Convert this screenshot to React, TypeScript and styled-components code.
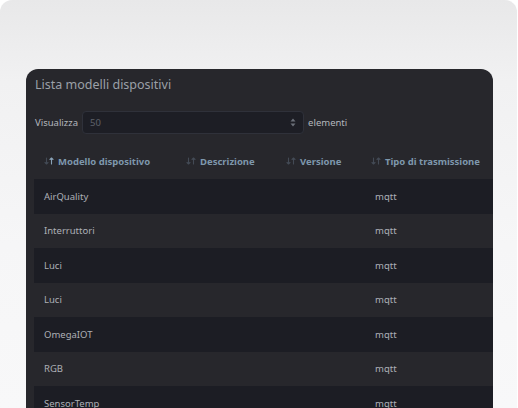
import React, { FC } from 'react';
import styled, { createGlobalStyle } from 'styled-components';

const GlobalStyle = createGlobalStyle`
  html, body {
    margin: 0;
    padding: 0;
    background: #ffffff;
  }
  body {
    font-family: "Noto Sans", "Open Sans", sans-serif;
    -webkit-font-smoothing: antialiased;
  }
`;

const Backdrop = styled.div`
  width: 517px;
  height: 408px;
  box-sizing: border-box;
  padding: 69px 24px 0 26px;
  border-radius: 12px 12px 0 0;
  background: linear-gradient(180deg, #e8e8e9 0%, #f1f1f2 20%, #f6f6f7 60%, #f8f8f9 100%);
  overflow: hidden;
`;

const Panel = styled.section`
  height: 100%;
  background: #27272c;
  border-radius: 12px 12px 0 0;
  display: flex;
  flex-direction: column;
`;

const Title = styled.h2`
  margin: 0;
  padding: 7px 9px 0;
  font-size: 12.5px;
  line-height: 18px;
  font-weight: 400;
  color: #9ba0a8;
`;

const Divider = styled.div`
  height: 2px;
  margin: 8px 0 0 9px;
  background: #343944;
`;

const Controls = styled.div`
  display: flex;
  align-items: center;
  gap: 4px;
  margin: 9px 0 0 9px;
  font-size: 9.5px;
  color: #b4b7be;
`;

const Select = styled.div`
  width: 222px;
  height: 23px;
  box-sizing: border-box;
  display: flex;
  align-items: center;
  justify-content: space-between;
  padding: 0 7px 0 7px;
  background: #1d1e25;
  border: 1px solid #2f313a;
  border-radius: 4px;
  color: #5d616a;
  font-size: 9.5px;
`;

const Table = styled.div`
  margin: 9px 0 0 8px;
  display: flex;
  flex-direction: column;
`;

const Row = styled.div<{ $dark?: boolean; $head?: boolean }>`
  display: grid;
  grid-template-columns: 142px 100px 85px 1fr;
  align-items: center;
  height: ${(p) => (p.$head ? '36px' : '34.5px')};
  background: ${(p) => (p.$dark ? '#1c1d24' : 'transparent')};
`;

const HeadCell = styled.div`
  display: flex;
  align-items: center;
  gap: 4px;
  padding-left: 10px;
  font-size: 9.5px;
  font-weight: 700;
  color: #7e97ac;
  white-space: nowrap;
`;

const Cell = styled.div<{ $inset?: number }>`
  padding-left: ${(p) => p.$inset ?? 10}px;
  font-size: 9.5px;
  color: #adb0b7;
  white-space: nowrap;
`;

const SortIcon: FC<{ active?: boolean }> = ({ active }) => (
  <svg width="10" height="8" viewBox="0 0 10 8" fill="none" strokeLinecap="round" strokeLinejoin="round">
    <g stroke="#434a55" strokeWidth="1.1">
      <path d="M2.5 1v6M1 5.5l1.5 1.5L4 5.5" />
    </g>
    <g stroke={active ? '#8aa3b8' : '#434a55'} strokeWidth="1.1">
      <path d="M7.5 7V1M6 2.5L7.5 1 9 2.5" />
    </g>
  </svg>
);

const Chevrons: FC = () => (
  <svg width="6" height="9" viewBox="0 0 6 9" fill="#6b6f78">
    <path d="M3 0.5L5.5 3.5H0.5z" />
    <path d="M3 8.5L0.5 5.5H5.5z" />
  </svg>
);

const models = ['AirQuality', 'Interruttori', 'Luci', 'Luci', 'OmegaIOT', 'RGB', 'SensorTemp'];

const columns = ['Modello dispositivo', 'Descrizione', 'Versione', 'Tipo di trasmissione'];

const App: FC = () => (
  <>
    <GlobalStyle />
    <Backdrop>
      <Panel>
        <Title>Lista modelli dispositivi</Title>
        <Divider />
        <Controls>
          <span>Visualizza</span>
          <Select>
            <span>50</span>
            <Chevrons />
          </Select>
          <span>elementi</span>
        </Controls>
        <Table>
          <Row $head>
            {columns.map((c, i) => (
              <HeadCell key={c}>
                <SortIcon active={i === 0} />
                {c}
              </HeadCell>
            ))}
          </Row>
          {models.map((m, i) => (
            <Row key={i} $dark={i % 2 === 0}>
              <Cell>{m}</Cell>
              <Cell />
              <Cell />
              <Cell $inset={14}>mqtt</Cell>
            </Row>
          ))}
        </Table>
      </Panel>
    </Backdrop>
  </>
);

export default App;
